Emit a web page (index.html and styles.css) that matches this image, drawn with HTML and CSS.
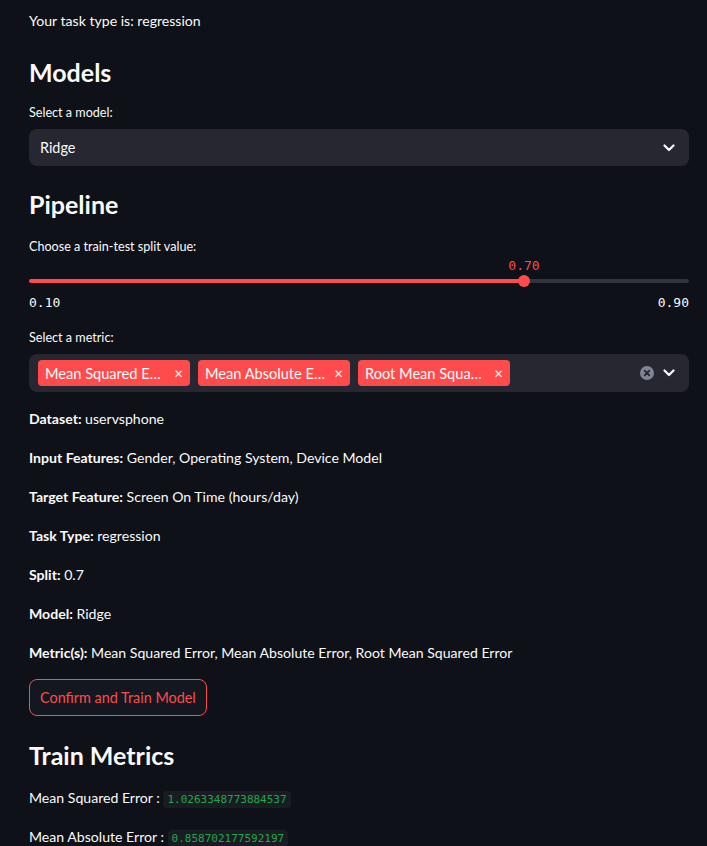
FILE: index.html
```html
<!DOCTYPE html>
<html lang="en">
<head>
<meta charset="utf-8">
<title>Pipeline</title>
<link rel="stylesheet" href="styles.css">
</head>
<body>
<main class="main">
  <p class="text first">Your task type is: regression</p>

  <h3 class="heading h-models">Models</h3>
  <label class="label label-model">Select a model:</label>
  <div class="select">
    <span class="select-value">Ridge</span>
    <svg class="chev" width="12" height="8" viewBox="0 0 12 8"><path d="M1.5 1.5 L6 6 L10.5 1.5" fill="none" stroke="#fafafa" stroke-width="2.2" stroke-linecap="round" stroke-linejoin="round"/></svg>
  </div>

  <h3 class="heading h-pipeline">Pipeline</h3>
  <label class="label label-split">Choose a train-test split value:</label>
  <div class="slider">
    <div class="slider-track">
      <div class="slider-fill" style="width: 75%"></div>
      <div class="slider-thumb" style="left: 75%">
        <span class="slider-value">0.70</span>
      </div>
    </div>
    <div class="slider-ticks"><span>0.10</span><span>0.90</span></div>
  </div>

  <label class="label label-metric">Select a metric:</label>
  <div class="multi">
    <div class="tags">
      <span class="tag"><span class="tag-text">Mean Squared E…</span><span class="tag-x">×</span></span>
      <span class="tag"><span class="tag-text">Mean Absolute E…</span><span class="tag-x">×</span></span>
      <span class="tag"><span class="tag-text">Root Mean Squa…</span><span class="tag-x">×</span></span>
    </div>
    <div class="multi-icons">
      <svg width="14" height="14" viewBox="0 0 14 14"><circle cx="7" cy="7" r="7" fill="#808495"/><path d="M4.7 4.7 L9.3 9.3 M9.3 4.7 L4.7 9.3" stroke="#262730" stroke-width="1.8" stroke-linecap="round"/></svg>
      <svg class="chev" width="12" height="8" viewBox="0 0 12 8"><path d="M1.5 1.5 L6 6 L10.5 1.5" fill="none" stroke="#fafafa" stroke-width="2.2" stroke-linecap="round" stroke-linejoin="round"/></svg>
    </div>
  </div>

  <div class="summary">
    <p class="text"><b>Dataset:</b> uservsphone</p>
    <p class="text"><b>Input Features:</b> Gender, Operating System, Device Model</p>
    <p class="text"><b>Target Feature:</b> Screen On Time (hours/day)</p>
    <p class="text"><b>Task Type:</b> regression</p>
    <p class="text"><b>Split:</b> 0.7</p>
    <p class="text"><b>Model:</b> Ridge</p>
    <p class="text"><b>Metric(s):</b> Mean Squared Error, Mean Absolute Error, Root Mean Squared Error</p>
  </div>

  <button class="btn">Confirm and Train Model</button>

  <h3 class="heading h-train">Train Metrics</h3>
  <div class="metrics">
    <p class="text">Mean Squared Error : <code class="code">1.0263348773884537</code></p>
    <p class="text">Mean Absolute Error : <code class="code">0.858702177592197</code></p>
  </div>
</main>
</body>
</html>
```
FILE: styles.css
```css
html, body {
  margin: 0;
  padding: 0;
  background: #0e1117;
  overflow: hidden;
}
body {
  color: #fafafa;
  font-family: Lato, "Noto Sans", sans-serif;
  font-size: 14.1px;
}
.main {
  padding: 9px 18px 0 29px;
  width: 660px;
}
.text {
  margin: 0;
  line-height: 24px;
  height: 24px;
  white-space: nowrap;
}
.text b { font-weight: 700; }
.heading {
  margin: 0;
  font-size: 25px;
  font-weight: 700;
  line-height: 36px;
  height: 36px;
}
.h-models { margin-top: 21px; }
.h-pipeline { margin-top: 20px; }
.h-train { margin-top: 21px; }
.label {
  display: block;
  font-size: 12.6px;
  line-height: 20px;
  height: 20px;
}
.label-model { margin-top: 13px; }
.label-split { margin-top: 15px; }
.label-metric { margin-top: 16px; }
.select {
  margin-top: 6px;
  height: 37px;
  background: #262730;
  border-radius: 8px;
  display: flex;
  align-items: center;
  justify-content: space-between;
  padding: 0 14px 0 11px;
}
.select-value { font-size: 14.4px; }
.chev { display: block; }
.slider { margin-top: 22px; }
.slider-track {
  position: relative;
  height: 4px;
  border-radius: 2px;
  background: #31333f;
}
.slider-fill {
  height: 4px;
  border-radius: 2px;
  background: #ff4b4b;
}
.slider-thumb {
  position: absolute;
  top: -4px;
  width: 12px;
  height: 12px;
  margin-left: -6px;
  border-radius: 50%;
  background: #ff4b4b;
}
.slider-value {
  position: absolute;
  bottom: 13px;
  left: 50%;
  transform: translateX(-50%);
  font-family: "DejaVu Sans Mono", monospace;
  font-size: 13px;
  line-height: 16px;
  color: #ff4b4b;
  white-space: nowrap;
}
.slider-ticks {
  display: flex;
  justify-content: space-between;
  margin-top: 11px;
  font-family: "DejaVu Sans Mono", monospace;
  font-size: 13px;
  line-height: 18px;
  height: 18px;
}
.multi {
  margin-top: 6px;
  height: 38px;
  background: #262730;
  border-radius: 8px;
  display: flex;
  align-items: center;
  justify-content: space-between;
  padding: 0 14px 0 9px;
}
.tags { display: flex; gap: 8px; }
.tag {
  display: flex;
  align-items: center;
  justify-content: space-between;
  width: 152px;
  box-sizing: border-box;
  height: 26px;
  padding: 0 7px;
  background: #ff4b4b;
  border-radius: 4px;
  font-size: 14.6px;
  color: #fff;
}
.tag-x { font-size: 15px; }
.multi-icons { display: flex; align-items: center; gap: 9px; }
.summary {
  margin-top: 15px;
  display: flex;
  flex-direction: column;
  gap: 15px;
}
.btn {
  margin-top: 14px;
  display: block;
  height: 37px;
  padding: 0 10px;
  background: #131720;
  border: 1px solid #ff4b4b;
  border-radius: 8px;
  color: #ff4b4b;
  font-family: Lato, "Noto Sans", sans-serif;
  font-size: 14.4px;
}
.metrics {
  margin-top: 13px;
  display: flex;
  flex-direction: column;
  gap: 15px;
}
.code {
  font-family: "DejaVu Sans Mono", monospace;
  font-size: 11px;
  color: #21a84a;
  background: #1a1c24;
  padding: 2px 4px;
  border-radius: 4px;
}
```
